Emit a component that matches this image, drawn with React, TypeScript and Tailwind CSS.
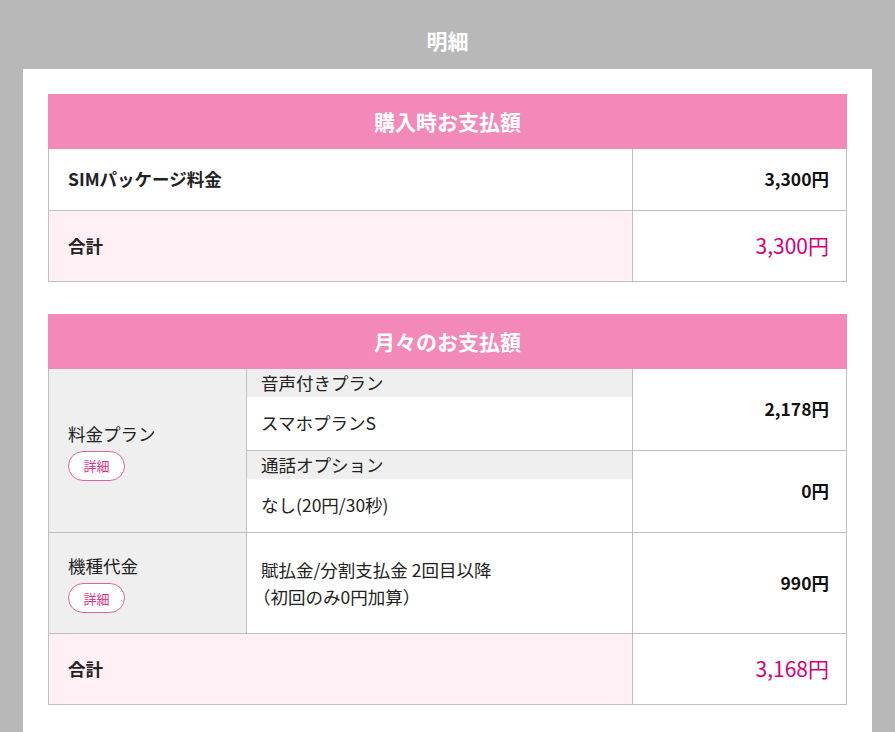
import React from 'react';

const font = { fontFamily: '"Noto Sans CJK JP", "Noto Sans", sans-serif' };

const DetailButton: React.FC = () => (
  <button className="mt-[4px] w-[57px] h-[30px] rounded-full border border-[#e8609f] bg-white text-[13px] leading-none text-[#e0307f]">
    詳細
  </button>
);

const SectionHeader: React.FC<{ title: string }> = ({ title }) => (
  <div className="h-[55px] bg-[#f389b9] flex items-center justify-center text-white text-[21px] font-bold">
    {title}
  </div>
);

const Price: React.FC<{ value: string }> = ({ value }) => (
  <div className="flex-1 flex items-center justify-end pr-[17px] text-[17.5px] font-bold text-[#111]">{value}</div>
);

const TotalPrice: React.FC<{ value: string }> = ({ value }) => (
  <div className="flex-1 flex items-center justify-end pr-[17px] text-[21px] text-[#d4007a] bg-white">{value}</div>
);

const plans = [
  { label: '音声付きプラン', value: 'スマホプランS', price: '2,178円' },
  { label: '通話オプション', value: 'なし(20円/30秒)', price: '0円' },
];

export default function App() {
  return (
    <div className="h-[732px] overflow-hidden bg-[#b8b8b8] text-[#222]" style={font}>
      <div className="h-[69px] pt-[27px] text-center text-white text-[21px] leading-[26px] font-bold">明細</div>

      <div className="mx-[23px] bg-white px-[25px] pt-[25px] pb-[40px]">
        {/* 購入時 */}
        <SectionHeader title="購入時お支払額" />
        <div className="border-x border-b border-[#bfbfbf]">
          <div className="flex h-[62px] border-b border-[#bfbfbf]">
            <div className="w-[584px] border-r border-[#bfbfbf] flex items-center pl-[19px] text-[17.5px] font-bold">
              SIMパッケージ料金
            </div>
            <Price value="3,300円" />
          </div>
          <div className="flex h-[70px]">
            <div className="w-[584px] border-r border-[#bfbfbf] bg-[#fff0f6] flex items-center pl-[19px] text-[17.5px] font-bold">
              合計
            </div>
            <TotalPrice value="3,300円" />
          </div>
        </div>

        {/* 月々 */}
        <div className="mt-[32px]">
          <SectionHeader title="月々のお支払額" />
          <div className="border-x border-b border-[#bfbfbf]">
            <div className="flex border-b border-[#bfbfbf]">
              <div className="w-[198px] border-r border-[#bfbfbf] bg-[#efefef] flex flex-col justify-center items-start pl-[19px] text-[17.5px]">
                <span className="leading-[26px]">料金プラン</span>
                <DetailButton />
              </div>
              <div className="flex-1 flex flex-col">
                {plans.map((p, i) => (
                  <div key={p.label} className={i === 0 ? 'flex h-[82px] border-b border-[#bfbfbf]' : 'flex h-[81px]'}>
                    <div className="w-[386px] border-r border-[#bfbfbf] flex flex-col text-[17.5px]">
                      <div className="h-[28px] bg-[#efefef] pl-[14px] flex items-center">{p.label}</div>
                      <div className="flex-1 pl-[14px] flex items-center">{p.value}</div>
                    </div>
                    <Price value={p.price} />
                  </div>
                ))}
              </div>
            </div>

            <div className="flex h-[101px] border-b border-[#bfbfbf]">
              <div className="w-[198px] border-r border-[#bfbfbf] bg-[#efefef] flex flex-col justify-center items-start pl-[19px] text-[17.5px]">
                <span className="leading-[26px]">機種代金</span>
                <DetailButton />
              </div>
              <div className="w-[386px] border-r border-[#bfbfbf] flex flex-col justify-center pl-[14px] text-[17.5px] leading-[27px]">
                <span>賦払金/分割支払金 2回目以降</span>
                <span className="-ml-[8px]">（初回のみ0円加算）</span>
              </div>
              <Price value="990円" />
            </div>

            <div className="flex h-[70px]">
              <div className="w-[584px] border-r border-[#bfbfbf] bg-[#fff0f6] flex items-center pl-[19px] text-[17.5px] font-bold">
                合計
              </div>
              <TotalPrice value="3,168円" />
            </div>
          </div>
        </div>
      </div>
    </div>
  );
}
